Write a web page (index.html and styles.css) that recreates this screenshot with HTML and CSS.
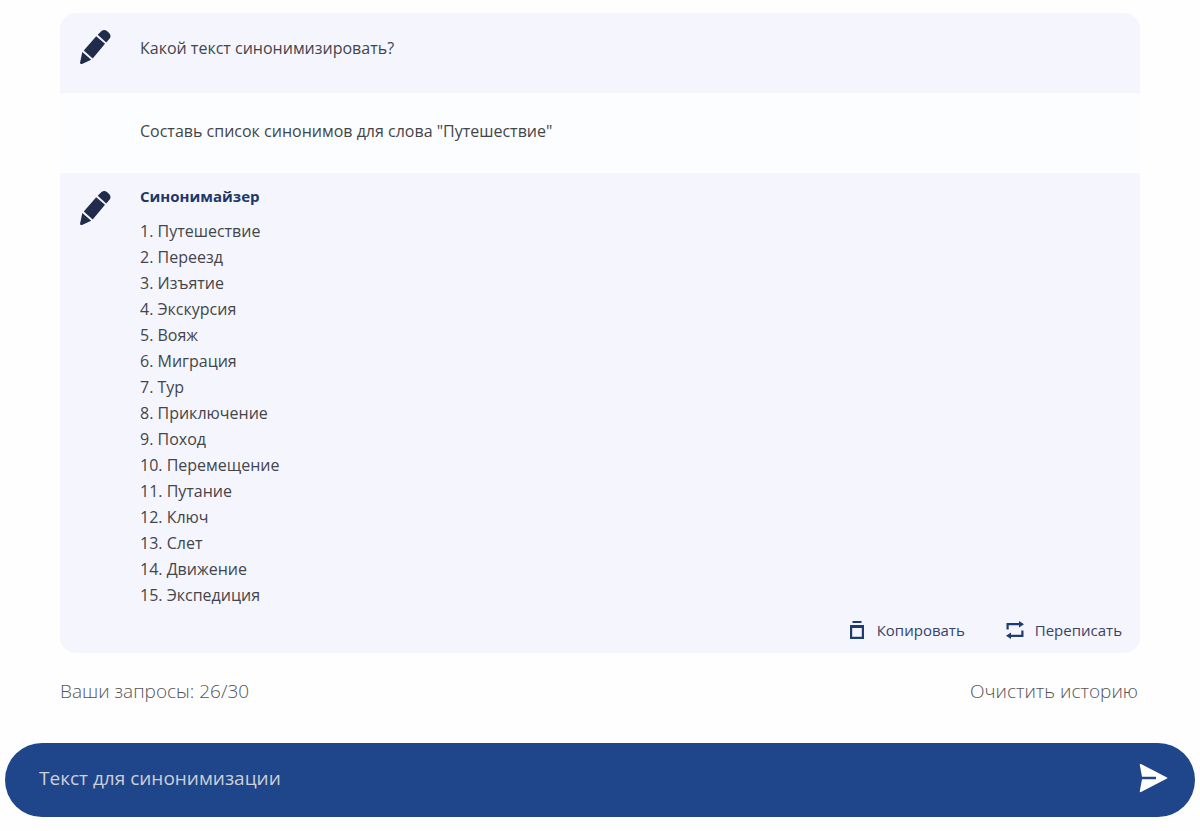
FILE: index.html
```html
<!DOCTYPE html>
<html lang="ru">
<head>
<meta charset="utf-8">
<meta name="viewport" content="width=device-width, initial-scale=1">
<title>Синонимайзер</title>
<link rel="stylesheet" href="styles.css">
</head>
<body>
<svg class="sprite" aria-hidden="true">
  <symbol id="pencil" viewBox="0 0 32 36">
    <path d="M17.700 5.800 21.500 2Q24.300-.2 27.200 2.200L28.900 3.700Q31.500 6.300 29.900 9.200L26.200 13.500ZM16.200 7.200 25 14.800 12.700 29.400 3.800 21.600ZM2.300 23 11.200 30.800 2 35Q-.1 35.500.1 33.500Z"/>
  </symbol>
</svg>
<main class="page">
  <section class="chat">
    <article class="message message-bot">
      <svg class="avatar" aria-hidden="true"><use href="#pencil"/></svg>
      <p class="text">Какой текст синонимизировать?</p>
    </article>
    <article class="message message-user">
      <p class="text">Составь список синонимов для слова "Путешествие"</p>
    </article>
    <article class="message message-bot message-answer">
      <svg class="avatar" aria-hidden="true"><use href="#pencil"/></svg>
      <div class="answer">
        <h2 class="name">Синонимайзер</h2>
        <div class="list">
          <div>1. Путешествие</div>
          <div>2. Переезд</div>
          <div>3. Изъятие</div>
          <div>4. Экскурсия</div>
          <div>5. Вояж</div>
          <div>6. Миграция</div>
          <div>7. Тур</div>
          <div>8. Приключение</div>
          <div>9. Поход</div>
          <div>10. Перемещение</div>
          <div>11. Путание</div>
          <div>12. Ключ</div>
          <div>13. Слет</div>
          <div>14. Движение</div>
          <div>15. Экспедиция</div>
        </div>
        <div class="actions">
          <button class="action" type="button">
            <svg class="action-icon" viewBox="0 0 20 20" aria-hidden="true"><path d="M5.500 1h9v2h-9zM3 5h14v14H3zM5.200 8v8.800h9.600V8z" fill-rule="evenodd"/></svg>
            Копировать
          </button>
          <button class="action" type="button">
            <svg class="action-icon" viewBox="0 0 20 20" aria-hidden="true"><path d="M1.500 9.500V3H14V1l5 3.200-5 3.200V5.200H3.700V9.500zM18.500 10.500V17H6v2l-5-3.200 5-3.200v2.200h10.300V10.500z"/></svg>
            Переписать
          </button>
        </div>
      </div>
    </article>
  </section>
  <div class="status">
    <span>Ваши запросы: 26/30</span>
    <button class="clear" type="button">Очистить историю</button>
  </div>
</main>
<form class="prompt">
  <input class="field" type="text" placeholder="Текст для синонимизации" aria-label="Текст для синонимизации">
  <button class="send" type="button" aria-label="Отправить">
    <svg class="send-icon" viewBox="0 0 30 30" aria-hidden="true"><path d="M2 1 28 14.500Q29 15 28 15.500L2 29Q.5 29.500.8 28L3 16.200H17V13.800H3L.8 2Q.5.500 2 1Z"/></svg>
  </button>
</form>
</body>
</html>
```
FILE: styles.css
```css
* {
  box-sizing: border-box;
}

body {
  margin: 0;
  background: #fefefe;
  color: #434549;
  font: 16px/26px "Open Sans", "Noto Sans", sans-serif;
}

button {
  padding: 0;
  border: 0;
  background: none;
  color: inherit;
  font: inherit;
  cursor: pointer;
}

.sprite {
  position: absolute;
  width: 0;
  height: 0;
}

.page {
  padding: 13px 60px 0;
}

.chat {
  overflow: hidden;
  border-radius: 16px;
}

.message {
  display: flex;
  min-height: 80px;
  padding: 16px 18px 8px 20px;
}

.message-bot {
  background: #f5f5fe;
}

.message-user {
  padding: 19px 20px 20px 80px;
  background: #fcfdff;
}

.avatar {
  flex: none;
  width: 32px;
  height: 36px;
  margin-right: 28px;
  fill: #212b4b;
}

.text {
  margin: 6px 0;
}

.message-answer {
  padding-bottom: 10px;
}

.message-answer .avatar {
  margin-top: 1px;
}

.answer {
  flex: 1;
  margin-top: -6px;
}

.name {
  margin: 0 0 9px;
  color: #1f3768;
  font-size: 15px;
  line-height: 26px;
  font-weight: 700;
}

.actions {
  display: flex;
  flex-wrap: wrap;
  justify-content: flex-end;
  gap: 40px;
  margin-top: 9px;
}

.action {
  display: flex;
  align-items: center;
  gap: 10px;
  color: #354468;
  font-size: 15px;
}

.action-icon {
  width: 20px;
  height: 20px;
  fill: #1d3c72;
}

.status {
  display: flex;
  flex-wrap: wrap;
  justify-content: space-between;
  margin-top: 24px;
  padding-right: 2px;
  color: #555;
  font-size: 19px;
  line-height: 28px;
  font-weight: 300;
}

.prompt {
  display: flex;
  align-items: center;
  height: 74px;
  margin: 38px 5px 14px;
  padding: 0 26px 4px 34px;
  border-radius: 37px;
  background: #1f468a;
  box-shadow: 0 0 24px #fff;
}

.field {
  flex: 1;
  min-width: 0;
  padding: 0;
  border: 0;
  outline: 0;
  background: none;
  color: #fff;
  font: 19px/28px "Open Sans", "Noto Sans", sans-serif;
}

.field::placeholder {
  color: #cdd0d6;
  opacity: 1;
}

.send {
  display: flex;
}

.send-icon {
  width: 30px;
  height: 30px;
  fill: #fff;
}
```
